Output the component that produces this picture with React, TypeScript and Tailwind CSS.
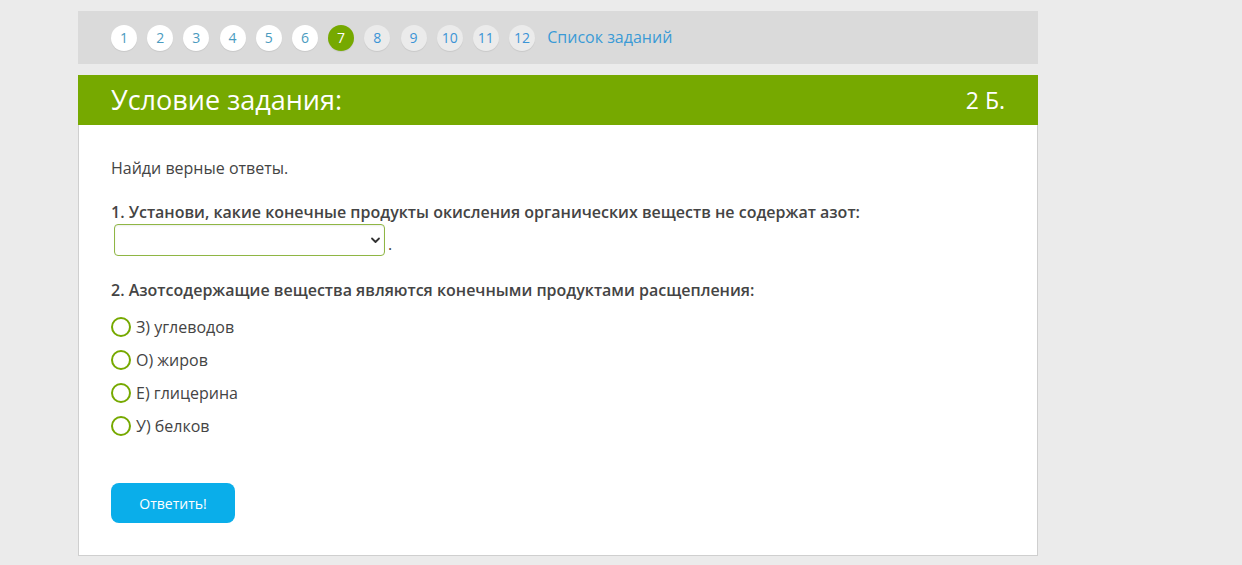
import React from 'react';

const tasks = [1, 2, 3, 4, 5, 6, 7, 8, 9, 10, 11, 12];
const current = 7;
const answers = ['З) углеводов', 'О) жиров', 'Е) глицерина', 'У) белков'];

function TaskNav() {
    return (
        <div className="flex items-center h-[53px] bg-[#dadada] pl-[33px] gap-[10.2px]">
            {tasks.map((n) => {
                const cls =
                    n === current
                        ? 'bg-[#76a900] text-white'
                        : n < current
                        ? 'bg-white text-[#4a9bc0]'
                        : 'bg-[#ebebeb] text-[#3b94d6]';
                return (
                    <span
                        key={n}
                        className={`${cls} w-[26px] h-[26px] rounded-full flex items-center justify-center text-[14px] shadow-[0_1px_1px_rgba(0,0,0,0.08)]`}
                    >
                        {n}
                    </span>
                );
            })}
            <a className="ml-[2px] text-[16px] text-[#3b9ad6] leading-none pb-[2px]">Список заданий</a>
        </div>
    );
}

export default function App() {
    return (
        <div className="min-h-[565px] bg-[#ebebeb] pt-[11px] font-['Open_Sans',sans-serif] text-[#444]">
            <div className="ml-[78px] w-[960px]">
                <TaskNav />
                <div className="mt-[11px] h-[50px] bg-[#76a900] flex items-center justify-between px-[33px] text-white">
                    <h1 className="text-[27px] leading-none pb-[2px]">Условие задания:</h1>
                    <span className="text-[23px] leading-none">2 Б.</span>
                </div>
                <div className="bg-white border border-t-0 border-[#cfcfcf] px-[32px] pt-[31px] pb-[32px]">
                    <p className="text-[16px] leading-[24px]">Найди верные ответы.</p>

                    <p className="mt-[20px] text-[16px] leading-[24px] font-semibold">
                        1. Установи, какие конечные продукты окисления органических веществ не содержат азот:
                    </p>
                    <div className="flex items-end">
                        <div className="ml-[3px] relative w-[271px] h-[32px] rounded-[4px] border border-[#8fb644] bg-white shadow-[inset_0_1px_2px_rgba(0,0,0,0.08)]">
                            <svg
                                className="absolute right-[3px] top-[11px]"
                                width="11"
                                height="9"
                                viewBox="0 0 11 9"
                                fill="none"
                            >
                                <path d="M2 2.5 L5.5 6 L9 2.5" stroke="#333" strokeWidth="1.8" strokeLinecap="round" strokeLinejoin="round" />
                            </svg>
                        </div>
                        <span className="ml-[3px] text-[16px] leading-[24px]">.</span>
                    </div>

                    <p className="mt-[22px] text-[16px] leading-[24px] font-semibold">
                        2. Азотсодержащие вещества являются конечными продуктами расщепления:
                    </p>
                    <div className="mt-[8px]">
                        {answers.map((a) => (
                            <label key={a} className="flex items-center h-[33px] gap-[5px]">
                                <span className="w-[20px] h-[20px] rounded-full border-2 border-[#76a900] bg-white" />
                                <span className="text-[16px] leading-[24px]">{a}</span>
                            </label>
                        ))}
                    </div>

                    <button
                        type="button"
                        className="mt-[41px] w-[124px] h-[40px] rounded-[8px] bg-[#0aaeea] text-white text-[14px]"
                    >
                        Ответить!
                    </button>
                </div>
            </div>
        </div>
    );
}
